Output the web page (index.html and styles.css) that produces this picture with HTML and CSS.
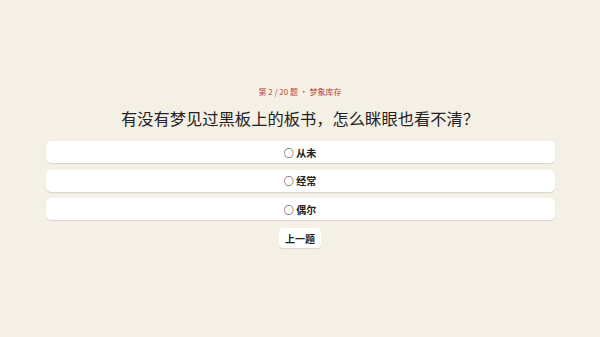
FILE: index.html
```html
<!DOCTYPE html>
<html>
<head>
    <meta charset="utf-8">
    <link rel="stylesheet" href="styles.css">
</head>
<body>
    <div class="quiz">
        <div class="meta">第 2 / 20 题 · 梦象库存</div>
        <h2 class="question">有没有梦见过黑板上的板书，怎么眯眼也看不清？</h2>
        <div class="options">
            <button class="option">○ 从未</button>
            <button class="option">○ 经常</button>
            <button class="option">○ 偶尔</button>
        </div>
        <button class="prev">上一题</button>
    </div>
</body>
</html>
```
FILE: styles.css
```css
html, body {
    height: 100%;
}

body {
    margin: 0;
    background: #f5f0e6;
    font-family: "Noto Sans CJK SC", "Noto Sans", sans-serif;
    color: #222;
    display: flex;
    align-items: center;
    justify-content: center;
}

.quiz {
    width: 509px;
    padding-bottom: 3px;
    display: flex;
    flex-direction: column;
    align-items: center;
}

.meta {
    font-size: 8px;
    color: #b0473a;
    line-height: 12px;
}

.question {
    margin: 8px 0 11px 0;
    font-size: 16.3px;
    font-weight: 400;
    line-height: 24px;
    color: #222;
}

.options {
    width: 100%;
    display: flex;
    flex-direction: column;
    gap: 6.5px;
}

.option {
    width: 100%;
    height: 22px;
    background: #fff;
    border: none;
    border-radius: 5px;
    box-shadow: 0 1px 1px rgba(0,0,0,0.12);
    font-family: inherit;
    font-size: 10px;
    font-weight: 700;
    color: #222;
    cursor: pointer;
}

.prev {
    margin-top: 8px;
    height: 20px;
    padding: 0 6px;
    background: #fff;
    border: none;
    border-radius: 4px;
    box-shadow: 0 1px 1px rgba(0,0,0,0.12);
    font-family: inherit;
    font-size: 10px;
    font-weight: 700;
    color: #222;
    cursor: pointer;
}
```
